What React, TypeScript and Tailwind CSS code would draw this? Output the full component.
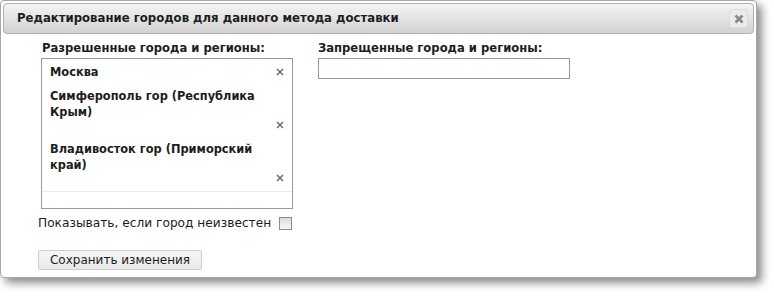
const RemoveIcon = () => (
  <svg width="8" height="8" viewBox="0 0 8 8" className="inline-block">
    <path d="M1 1L7 7M7 1L1 7" stroke="#5a6478" strokeWidth="1.4" />
  </svg>
);

const CloseIcon = () => (
  <svg width="10" height="10" viewBox="0 0 10 10">
    <path d="M1.5 1.5L8.5 8.5M8.5 1.5L1.5 8.5" stroke="#888" strokeWidth="2.6" />
  </svg>
);

export default function App() {
  return (
    <div className="w-[774px] h-[296px] bg-white font-['DejaVu_Sans',sans-serif] text-[#1d1d1d]">
      <div className="w-[757px] h-[278px] rounded-[4px] border border-[#a8a8a8] bg-white p-[2px] shadow-[5px_5px_8px_rgba(0,0,0,0.45)]">
        {/* Header */}
        <div className="h-[31px] rounded-[4px] border border-[#b0b0b0] bg-gradient-to-b from-[#f4f4f4] to-[#d2d2d2] flex items-center justify-between pl-[13px] pr-[5px]">
          <span className="text-[11.7px] font-bold">Редактирование городов для данного метода доставки</span>
          <button className="w-[19px] h-[19px] rounded-[3px] bg-[#ebebeb] border border-[#dcdcdc] flex items-center justify-center">
            <CloseIcon />
          </button>
        </div>

        {/* Body */}
        <div className="pl-[35px] pt-[7px]">
          <div className="flex gap-[25px]">
            <div className="w-[252px] ml-[3px]">
              <div className="text-[11.6px] font-bold leading-[15px] pl-[1px]">Разрешенные города и регионы:</div>
              <div className="h-[151px] border border-[#999] mt-[2px] pt-[5px] flex flex-col">
                <div className="pl-[8px] pr-[8px] text-[11.4px] font-bold">
                  <div className="flex justify-between items-center h-4 leading-4">
                    <span>Москва</span>
                    <RemoveIcon />
                  </div>
                  <div className="mt-2 leading-4">Симферополь гор (Республика<br />Крым)</div>
                  <div className="h-[10px] flex justify-end items-center"><RemoveIcon /></div>
                  <div className="mt-[11px] leading-4">Владивосток гор (Приморский<br />край)</div>
                  <div className="h-[10px] flex justify-end items-center"><RemoveIcon /></div>
                </div>
                <div className="mt-[8px] border-t border-[#ececec]" />
              </div>
            </div>
            <div className="w-[252px]">
              <div className="text-[11.6px] font-bold leading-[15px]">Запрещенные города и регионы:</div>
              <div className="h-[21px] border border-[#999] mt-[2px]" />
            </div>
          </div>

          <div className="flex items-center mt-[6px] w-[254px] justify-between">
            <span className="text-[12.2px] leading-[16px]">Показывать, если город неизвестен</span>
            <span className="w-[13px] h-[13px] border border-[#8a8a8a] bg-gradient-to-b from-[#dcdcdc] to-[#f6f6f6]" />
          </div>

          <button className="mt-[19px] h-[20px] w-[164px] border border-[#cfcfcf] rounded-[2px] bg-gradient-to-b from-[#f6f6f6] to-[#e9e9e9] text-[12px] leading-[18px]">
            Сохранить изменения
          </button>
        </div>
      </div>
    </div>
  );
}
